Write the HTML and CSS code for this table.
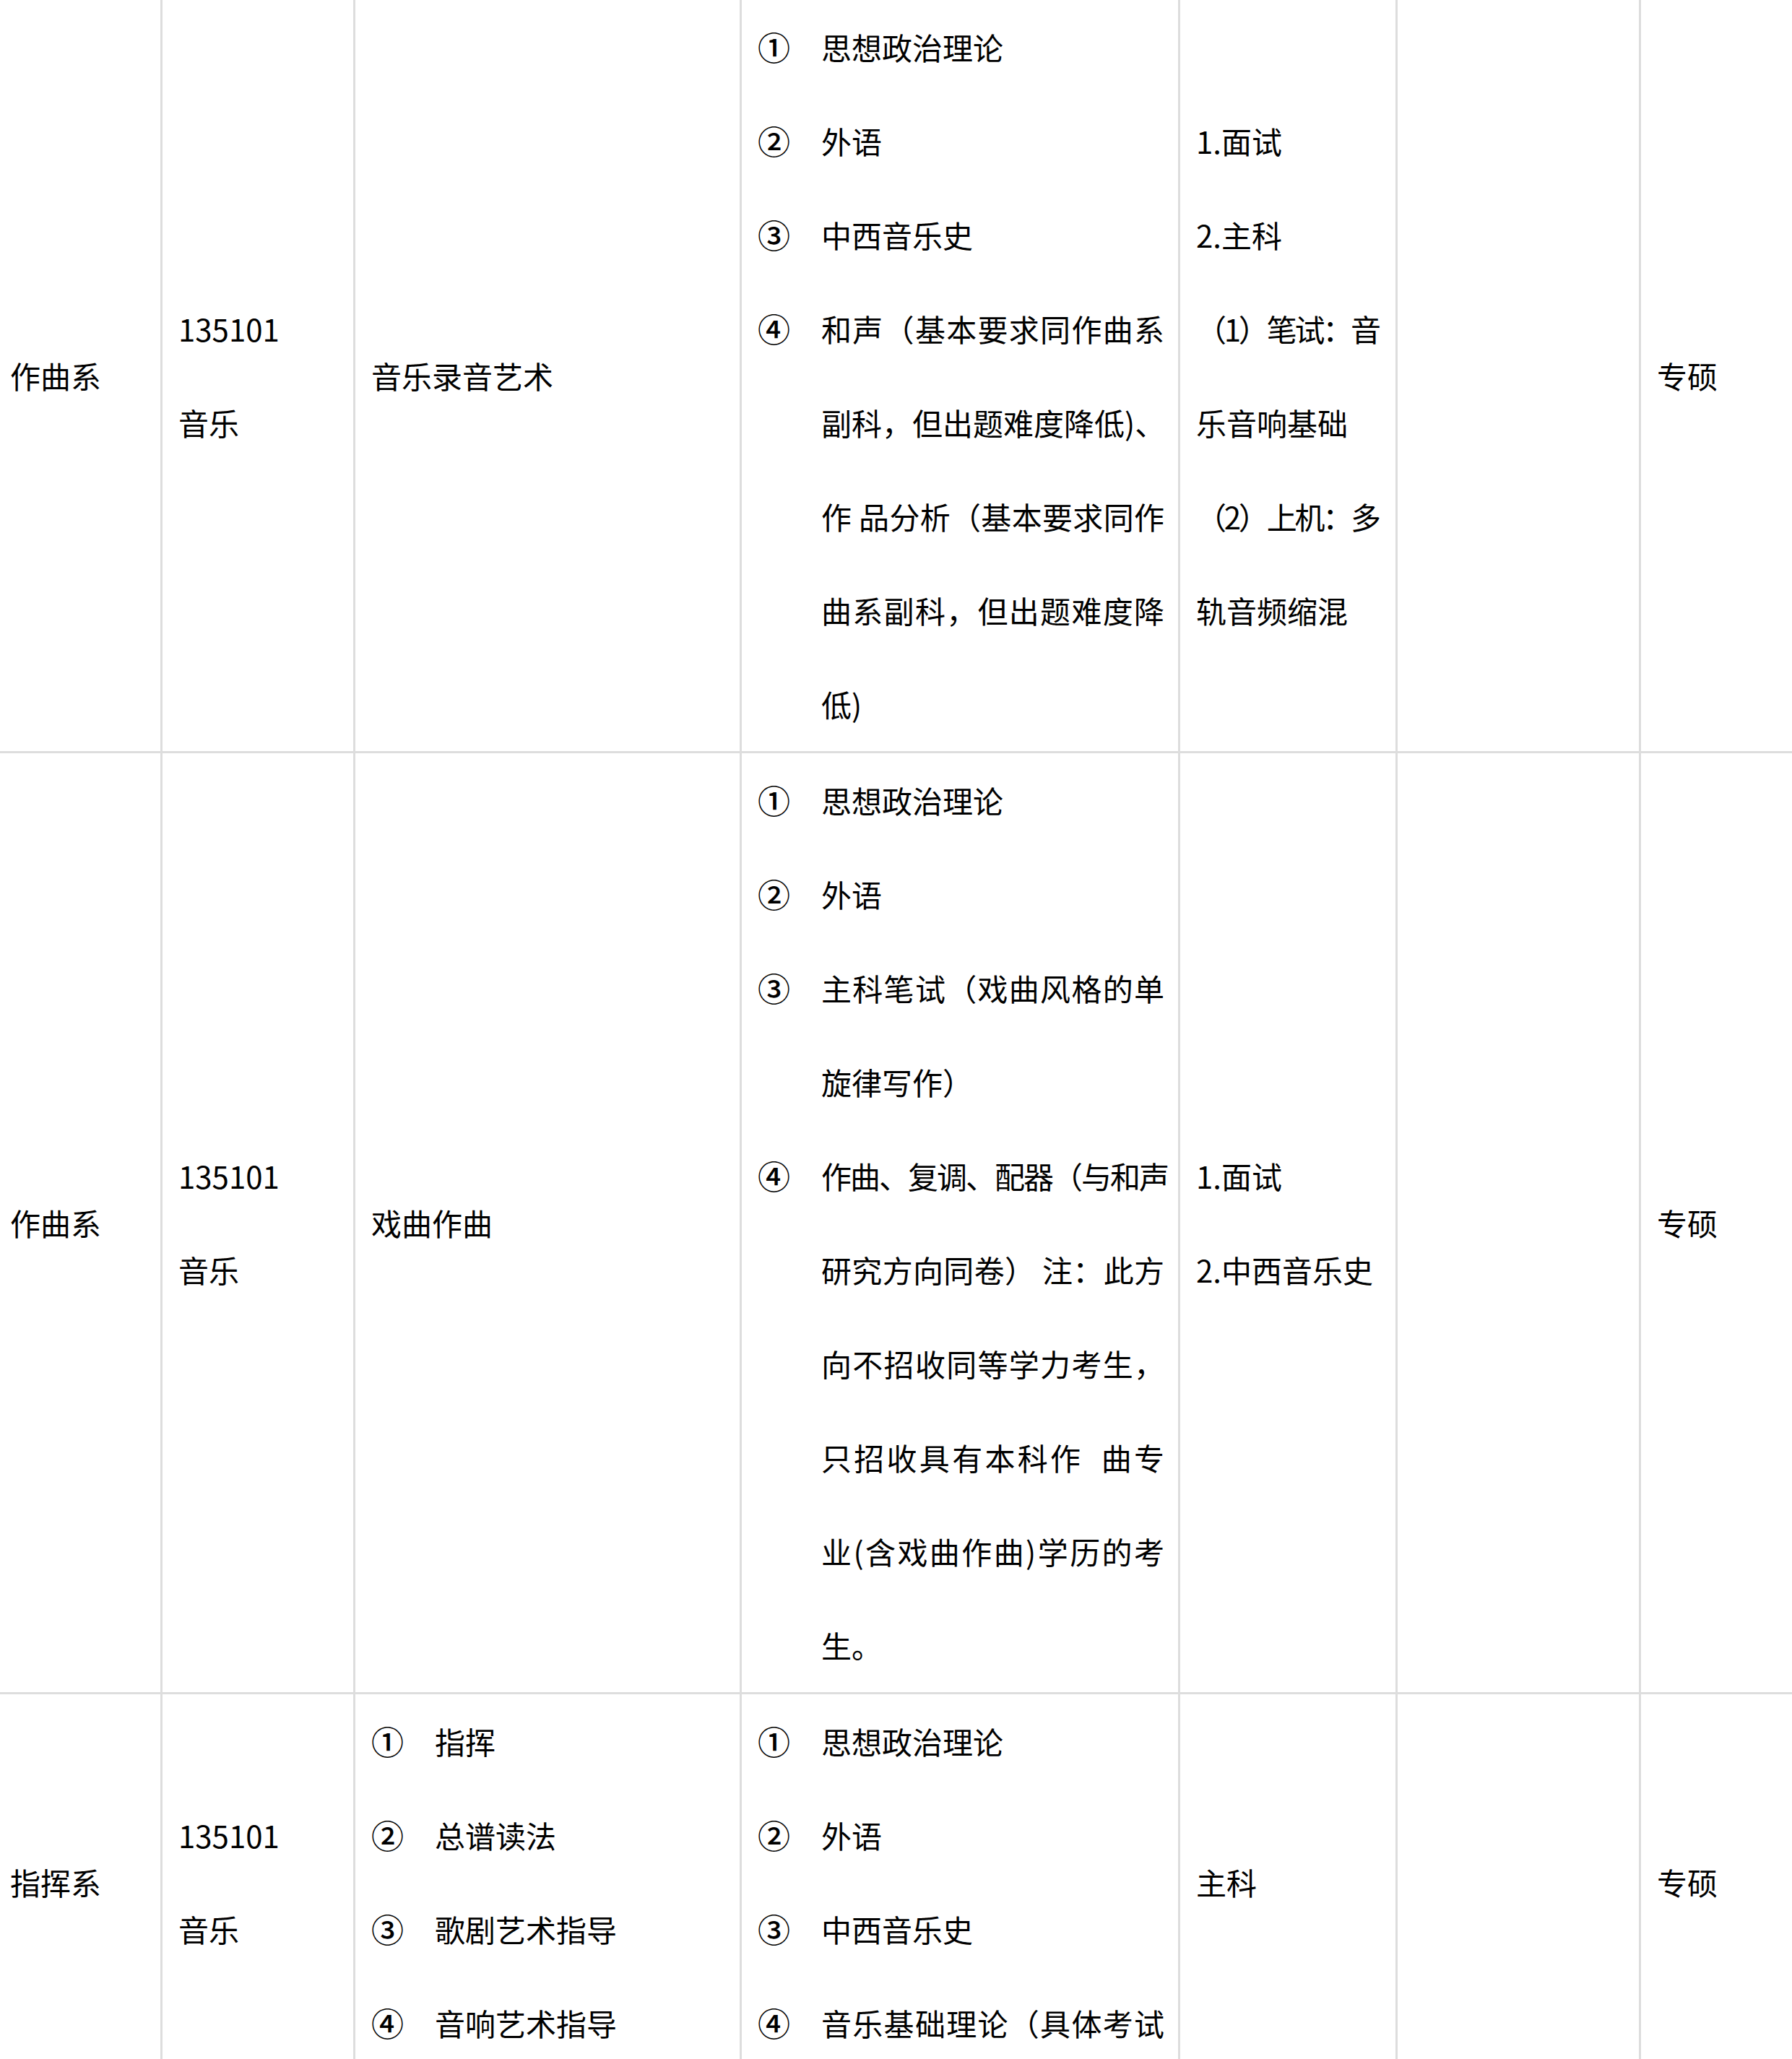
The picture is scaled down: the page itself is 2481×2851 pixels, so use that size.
FILE: index.html
```html
<!DOCTYPE html>
<html lang="zh-CN">
<head>
<meta charset="utf-8">
<title>招生专业目录</title>
<link rel="stylesheet" href="styles.css">
</head>
<body>
<div class="sheet">
  <!-- row 1 -->
  <div class="cell dept"><div class="ln">作曲系</div></div>
  <div class="cell"><div class="ln">135101</div><div class="ln">音乐</div></div>
  <div class="cell"><div class="ln">音乐录音艺术</div></div>
  <div class="cell">
    <div class="item"><span class="mk">①</span><div class="tx"><div class="ln">思想政治理论</div></div></div>
    <div class="item"><span class="mk">②</span><div class="tx"><div class="ln">外语</div></div></div>
    <div class="item"><span class="mk">③</span><div class="tx"><div class="ln">中西音乐史</div></div></div>
    <div class="item"><span class="mk">④</span><div class="tx">
      <div class="ln j">和声（基本要求同作曲系</div>
      <div class="ln j">副科，但出题难度降低)、</div>
      <div class="ln j">作 品分析（基本要求同作</div>
      <div class="ln j">曲系副科，但出题难度降</div>
      <div class="ln">低)</div>
    </div></div>
  </div>
  <div class="cell exam">
    <div class="ln">1.面试</div>
    <div class="ln">2.主科</div>
    <div class="ln j narrow">（1）笔试：音</div>
    <div class="ln">乐音响基础</div>
    <div class="ln j narrow">（2）上机：多</div>
    <div class="ln">轨音频缩混</div>
  </div>
  <div class="cell"></div>
  <div class="cell last"><div class="ln">专硕</div></div>

  <!-- row 2 -->
  <div class="cell dept"><div class="ln">作曲系</div></div>
  <div class="cell"><div class="ln">135101</div><div class="ln">音乐</div></div>
  <div class="cell"><div class="ln">戏曲作曲</div></div>
  <div class="cell">
    <div class="item"><span class="mk">①</span><div class="tx"><div class="ln">思想政治理论</div></div></div>
    <div class="item"><span class="mk">②</span><div class="tx"><div class="ln">外语</div></div></div>
    <div class="item"><span class="mk">③</span><div class="tx">
      <div class="ln j">主科笔试（戏曲风格的单</div>
      <div class="ln">旋律写作）</div>
    </div></div>
    <div class="item"><span class="mk">④</span><div class="tx">
      <div class="ln j tight">作曲、复调、配器（与和声</div>
      <div class="ln j">研究方向同卷） 注：此方</div>
      <div class="ln j">向不招收同等学力考生，</div>
      <div class="ln j">只招收具有本科作&nbsp;&nbsp;曲专</div>
      <div class="ln j">业(含戏曲作曲)学历的考</div>
      <div class="ln">生。</div>
    </div></div>
  </div>
  <div class="cell exam">
    <div class="ln">1.面试</div>
    <div class="ln">2.中西音乐史</div>
  </div>
  <div class="cell"></div>
  <div class="cell last"><div class="ln">专硕</div></div>

  <!-- row 3 -->
  <div class="cell dept"><div class="ln">指挥系</div></div>
  <div class="cell"><div class="ln">135101</div><div class="ln">音乐</div></div>
  <div class="cell">
    <div class="item"><span class="mk">①</span><div class="tx"><div class="ln">指挥</div></div></div>
    <div class="item"><span class="mk">②</span><div class="tx"><div class="ln">总谱读法</div></div></div>
    <div class="item"><span class="mk">③</span><div class="tx"><div class="ln">歌剧艺术指导</div></div></div>
    <div class="item"><span class="mk">④</span><div class="tx"><div class="ln">音响艺术指导</div></div></div>
  </div>
  <div class="cell">
    <div class="item"><span class="mk">①</span><div class="tx"><div class="ln">思想政治理论</div></div></div>
    <div class="item"><span class="mk">②</span><div class="tx"><div class="ln">外语</div></div></div>
    <div class="item"><span class="mk">③</span><div class="tx"><div class="ln">中西音乐史</div></div></div>
    <div class="item"><span class="mk">④</span><div class="tx"><div class="ln j">音乐基础理论（具体考试</div></div></div>
  </div>
  <div class="cell exam"><div class="ln">主科</div></div>
  <div class="cell"></div>
  <div class="cell last"><div class="ln">专硕</div></div>
</div>
</body>
</html>
```

FILE: styles.css
```css
html {
  overflow: hidden;
  background: #ffffff;
}

body {
  margin: 0;
  background: #ffffff;
  color: #000000;
  font-family: "Noto Sans CJK SC", "Noto Sans", "Liberation Sans", sans-serif;
  font-size: 42px;
  line-height: 130px;
}

.sheet {
  display: grid;
  grid-template-columns: 225px 267px 535px 607px 301px 337px 209px;
  width: 2481px;
}

.cell {
  box-sizing: border-box;
  display: flex;
  flex-direction: column;
  justify-content: center;
  padding: 0 19px 0 22px;
  border-right: 3px solid #dddddd;
  border-bottom: 3px solid #dddddd;
  min-width: 0;
}

.cell.dept {
  padding-left: 14px;
}

.cell.exam {
  padding-right: 24px;
}

.cell.last {
  border-right: none;
}

.ln {
  display: block;
  white-space: nowrap;
}

.ln.j {
  text-align: justify;
  text-align-last: justify;
}

.ln.tight {
  letter-spacing: -2px;
}

.ln.narrow {
  letter-spacing: -4px;
}

.item {
  display: flex;
  align-items: flex-start;
}

.mk {
  flex: 0 0 88px;
  font-size: 45px;
  font-weight: 500;
}

.tx {
  flex: 1 1 auto;
  min-width: 0;
}
```
